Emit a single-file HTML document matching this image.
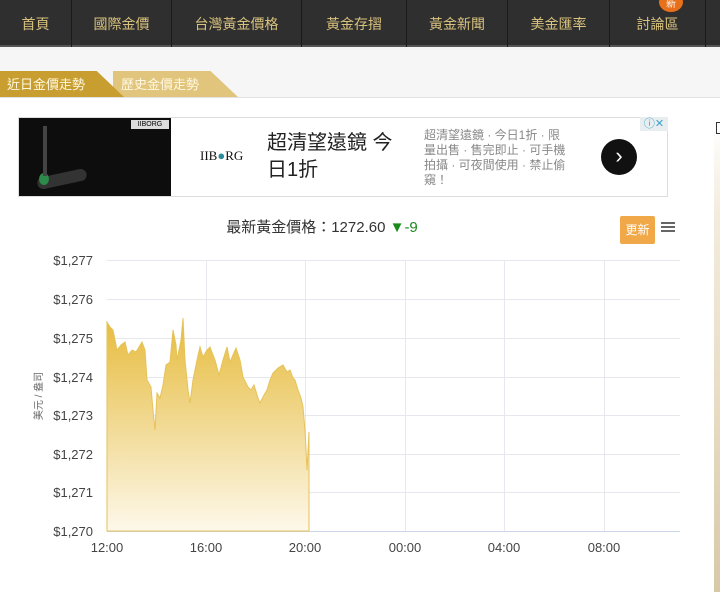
<!DOCTYPE html>
<html><head><meta charset="utf-8"><style>
*{margin:0;padding:0;box-sizing:border-box}
body{width:720px;height:592px;overflow:hidden;background:#fff;font-family:"Liberation Sans","Noto Sans CJK TC",sans-serif;position:relative}
.nav{position:absolute;left:0;top:0;width:720px;height:47px;background:#2f2f2f;border-bottom:2px solid #555}
.nav div{position:absolute;top:0;height:47px;line-height:48px;text-align:center;color:#d9c27e;font-size:14px;border-right:1px solid #1a1a1a}
.sub{position:absolute;left:0;top:47px;width:720px;height:51px;background:#f6f6f6;border-bottom:1px solid #e2e2e2}
.t{position:absolute;top:24px;height:26px;line-height:27px;font-size:13px;color:#fff8e0;padding-left:7px}
.ad{position:absolute;left:18px;top:117px;width:650px;height:80px;border:1px solid #ddd;background:#fff}
</style></head><body>
<div class="nav">
<div style="left:0;width:72px">首頁</div>
<div style="left:72px;width:100px">國際金價</div>
<div style="left:172px;width:130px">台灣黃金價格</div>
<div style="left:302px;width:105px">黃金存摺</div>
<div style="left:407px;width:101px">黃金新聞</div>
<div style="left:508px;width:102px">美金匯率</div>
<div style="left:610px;width:96px">討論區</div>
<div style="left:706px;width:14px;border:none"></div>
</div>
<div style="position:absolute;left:659px;top:-8px;width:24px;height:20px;border-radius:50%;background:#e8701a;color:#fff;font-size:10px;text-align:center;line-height:26px">新</div>
<div class="sub">
<div class="t" style="left:113px;width:125px;background:#e2c57d;clip-path:polygon(0 0,78% 0,100% 100%,0 100%);padding-left:8px">歷史金價走勢</div>
<div class="t" style="left:0;width:124px;background:#c89e30;clip-path:polygon(0 0,78% 0,100% 100%,0 100%)">近日金價走勢</div>
</div>
<div class="ad">
<div style="position:absolute;left:0;top:0;width:152px;height:78px;background:#0d0d0d">
<div style="position:absolute;left:112px;top:2px;width:38px;height:9px;background:#ddd;font-size:7px;text-align:center;line-height:9px;color:#000">IIBORG</div>
<div style="position:absolute;left:18px;top:55px;width:50px;height:12px;background:#333;border-radius:6px;transform:rotate(-12deg)"></div>
<div style="position:absolute;left:20px;top:55px;width:10px;height:12px;background:#2c8a4a;border-radius:50%"></div>
<div style="position:absolute;left:24px;top:8px;width:4px;height:50px;background:#444"></div>
</div>
<div style="position:absolute;left:181px;top:30px;font-size:13px;font-family:'Liberation Serif',serif;color:#111">IIB<span style="color:#2a8a9a">●</span>RG</div>
<div style="position:absolute;left:248px;top:12px;width:142px;font-size:20px;line-height:27px;color:#222">超清望遠鏡 今日1折</div>
<div style="position:absolute;left:405px;top:10px;width:142px;font-size:12px;line-height:15px;color:#888">超清望遠鏡 · 今日1折 · 限量出售 · 售完即止 · 可手機拍攝 · 可夜間使用 · 禁止偷窺！</div>
<div style="position:absolute;left:582px;top:21px;width:36px;height:36px;border-radius:50%;background:#111;color:#fff;font-size:22px;text-align:center;line-height:34px">›</div>
<div style="position:absolute;left:621px;top:-1px;width:28px;height:14px;background:#e8eef0;color:#3aa0c8;font-size:11px;line-height:14px;text-align:center">ⓘ✕</div>
</div>
<div style="position:absolute;left:714px;top:122px;width:6px;height:470px;background:linear-gradient(#fff 0,#f3ebdc 20%,#e8dcc4 60%,#d8c8a8)"></div>
<div style="position:absolute;left:716px;top:122px;width:4px;height:12px;border:1px solid #333;border-right:none"></div>
<div style="position:absolute;left:0;top:216px;width:644px;text-align:center;font-size:15px;color:#333">最新黃金價格：1272.60 <span style="color:#1a8a1a">▼-9</span></div>
<div style="position:absolute;left:620px;top:216px;width:35px;height:28px;background:#f0a848;border-radius:2px;color:#fff;font-size:12px;line-height:28px;text-align:center">更新</div>
<div style="position:absolute;left:661px;top:222px;width:14px;height:2px;background:#666;box-shadow:0 4px 0 #666,0 8px 0 #666"></div>
<svg style="position:absolute;left:0;top:250px" width="712" height="320" viewBox="0 250 712 320">
<defs><linearGradient id="g" x1="0" y1="0" x2="0" y2="1"><stop offset="0" stop-color="#e6bb3c"/><stop offset="1" stop-color="#fdf8ea"/></linearGradient></defs>
<g stroke="#e6e8ee" stroke-width="1">
<line x1="107" y1="260.5" x2="680" y2="260.5"/><line x1="107" y1="299.5" x2="680" y2="299.5"/><line x1="107" y1="338.5" x2="680" y2="338.5"/><line x1="107" y1="377.5" x2="680" y2="377.5"/><line x1="107" y1="415.5" x2="680" y2="415.5"/><line x1="107" y1="454.5" x2="680" y2="454.5"/><line x1="107" y1="492.5" x2="680" y2="492.5"/>
<line x1="206.5" y1="260" x2="206.5" y2="531"/><line x1="305.5" y1="260" x2="305.5" y2="531"/><line x1="405.5" y1="260" x2="405.5" y2="531"/><line x1="504.5" y1="260" x2="504.5" y2="531"/><line x1="604.5" y1="260" x2="604.5" y2="531"/>
</g>
<line x1="107" y1="531.5" x2="680" y2="531.5" stroke="#ccd6eb"/>
<path d="M107,531 L107,322 110,327 113,330 117,350 121,345 125,342 128,355 132,350 136,352 142,342 145,350 147,380 151,387 153,410 155,430 157,393 160,398 163,385 166,365 170,362 173,330 176,345 177,360 181,340 183,318 185,360 188,390 190,403 193,380 197,360 200,347 203,357 207,350 210,347 213,355 215,360 219,375 223,360 227,347 230,362 233,355 236,348 240,360 243,377 248,387 251,390 254,385 258,398 260,403 264,395 267,390 270,380 273,373 278,368 283,365 287,372 290,370 293,378 295,380 298,390 301,398 303,407 305,430 307,470 309,432 309,531 Z" fill="url(#g)" stroke="#e6c25a" stroke-width="1"/>
<g font-size="13" fill="#444" text-anchor="end">
<text x="93" y="265">$1,277</text><text x="93" y="304">$1,276</text><text x="93" y="343">$1,275</text><text x="93" y="382">$1,274</text><text x="93" y="420">$1,273</text><text x="93" y="459">$1,272</text><text x="93" y="497">$1,271</text><text x="93" y="536">$1,270</text>
</g>
<g font-size="13" fill="#444" text-anchor="middle">
<text x="107" y="552">12:00</text><text x="206" y="552">16:00</text><text x="305" y="552">20:00</text><text x="405" y="552">00:00</text><text x="504" y="552">04:00</text><text x="604" y="552">08:00</text>
</g>
<text transform="translate(42,396) rotate(-90)" font-size="10" fill="#666" text-anchor="middle">美元 / 盎司</text>
</svg>
</body></html>
